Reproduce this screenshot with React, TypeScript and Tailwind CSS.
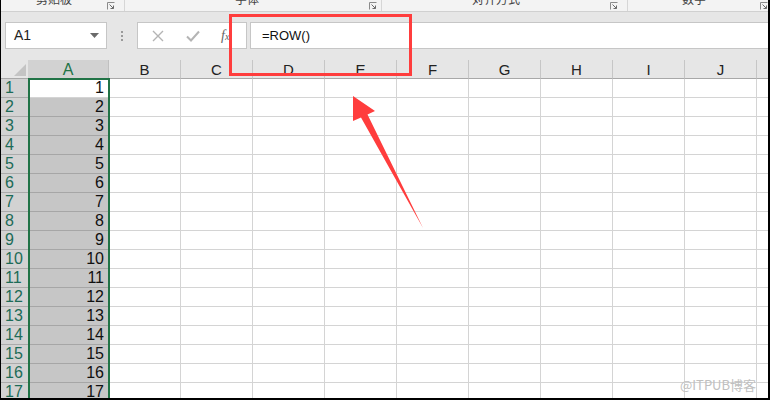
import React from "react";

const cols = ["B", "C", "D", "E", "F", "G", "H", "I", "J", ""];
const rows = Array.from({ length: 17 }, (_, i) => i + 1);

const groups = [
  { label: "剪贴板", w: "w-[124px]", lw: "w-[106px]" },
  { label: "字体", w: "w-[257px]", lw: "w-[244px]" },
  { label: "对齐方式", w: "w-[246px]", lw: "w-[228px]" },
  { label: "数字", w: "w-[143px]", lw: "w-[132px]" },
];

function Launcher() {
  return (
    <svg width="8" height="8" viewBox="0 0 8 8" className="mt-[2px] shrink-0">
      <path d="M0.5 7.5V0.5H7.5" fill="none" stroke="#8a8a8a" strokeWidth="1" />
      <path d="M2.5 2.5L6.5 6.5M6.5 3.5V6.5H3.5" fill="none" stroke="#6a6a6a" strokeWidth="1" />
    </svg>
  );
}

export default function App() {
  return (
    <div className="relative w-[770px] h-[400px] overflow-hidden bg-white border-l border-r-2 border-b-2 border-black font-['Liberation_Sans','Noto_Sans_CJK_SC',sans-serif]">
      {/* ribbon group labels, cut off at the top */}
      <div className="h-[12px] overflow-hidden bg-[#f3f3f3] border-b border-[#d0d0d0] flex">
        {groups.map((g) => (
          <div key={g.label} className={`${g.w} flex border-r border-[#d6d6d6] shrink-0`}>
            <div className={`${g.lw} text-center text-[12px] leading-[12px] -mt-[6px] text-[#444]`}>{g.label}</div>
            <Launcher />
          </div>
        ))}
      </div>

      {/* name box + formula bar */}
      <div className="h-[48px] bg-[#e6e6e6] flex items-start pt-[10px] pl-[4px] gap-0">
        <div className="w-[102px] h-[27px] bg-white border border-[#c6c6c6] flex items-center justify-between pl-[8px] pr-[7px]">
          <span className="text-[14px] text-[#222]">A1</span>
          <svg width="9" height="5" viewBox="0 0 9 5">
            <path d="M0 0H9L4.5 5Z" fill="#6a6a6a" />
          </svg>
        </div>
        <div className="w-[30px] h-[27px] flex flex-col items-center justify-center gap-[2px]">
          <span className="w-[2px] h-[2px] bg-[#9a9a9a]" />
          <span className="w-[2px] h-[2px] bg-[#9a9a9a]" />
          <span className="w-[2px] h-[2px] bg-[#9a9a9a]" />
        </div>
        <div className="w-[110px] h-[27px] bg-white border border-[#c6c6c6] flex items-center">
          <svg width="12" height="12" viewBox="0 0 12 12" className="ml-[14px]">
            <path d="M1 1L11 11M11 1L1 11" stroke="#b4b4b4" strokeWidth="1.4" />
          </svg>
          <svg width="14" height="12" viewBox="0 0 14 12" className="ml-[22px]">
            <path d="M1 6.5L5 10.5L13 1.5" fill="none" stroke="#b4b4b4" strokeWidth="2" />
          </svg>
          <span className="ml-[21px] text-[14px] italic text-[#666] font-['Liberation_Serif',serif]">
            f<span className="text-[10px]">x</span>
          </span>
        </div>
        <div className="flex-1 h-[27px] ml-[3px] bg-white border border-[#c6c6c6] border-r-0 flex items-center pl-[11px]">
          <span className="text-[13px] text-[#111]">=ROW()</span>
        </div>
      </div>

      {/* sheet */}
      <div className="grid grid-cols-[27px_81px_repeat(9,72px)_20px]">
        {/* header row */}
        <div className="h-[19px] bg-[#e6e6e6] border-b border-[#a8a8a8] flex items-end justify-end pr-[2px] pb-[2px]">
          <svg width="12" height="12" viewBox="0 0 12 12">
            <path d="M12 0V12H0Z" fill="#c4c4c4" />
          </svg>
        </div>
        <div className="h-[19px] bg-[#d2d2d2] border-b border-[#a8a8a8] border-r border-r-[#c0c0c0] text-center text-[16px] leading-[19px] text-[#217346]">
          A
        </div>
        {cols.map((c, i) => (
          <div
            key={"h" + i}
            className="h-[19px] bg-[#e6e6e6] border-b border-[#a8a8a8] border-r border-r-[#c6c6c6] text-center text-[15px] leading-[19px] text-[#222]"
          >
            {c}
          </div>
        ))}

        {rows.map((r) => (
          <React.Fragment key={r}>
            <div className="h-[19px] bg-[#d2d2d2] border-b border-[#ababab] pl-[4px] text-[16px] leading-[18px] text-[#1d6b57]">
              {r}
            </div>
            <div
              className={`h-[19px] border-b ${
                r === 1 ? "bg-white border-[#d4d4d4]" : "bg-[#c6c6c6] border-[#a6a6a6]"
              } text-right pr-[5px] text-[16px] leading-[18px] text-[#111]`}
            >
              {r}
            </div>
            {cols.map((c, i) => (
              <div key={c + i} className="h-[19px] border-b border-r border-[#d4d4d4]" />
            ))}
          </React.Fragment>
        ))}
      </div>

      {/* selection outline A1:A17 */}
      <div className="absolute left-[27px] top-[78px] w-[82px] h-[340px] border-2 border-[#217346] pointer-events-none" />

      {/* annotation: red box + arrow */}
      <div className="absolute left-[228px] top-[14px] w-[183px] h-[62px] border-[3px] border-[#ff3d3d]" />
      <svg className="absolute left-0 top-0 pointer-events-none" width="770" height="400" viewBox="0 0 770 400">
        <polygon
          points="352,96 374,111 366.5,114.5 422,228 360,117.5 352,121"
          fill="#ff3d3d"
        />
      </svg>

      {/* watermark */}
      <div className="absolute left-[679px] top-[375px] text-[13px] text-[#c0c0c0] font-['Noto_Sans_CJK_SC',sans-serif]">
        @ITPUB博客
      </div>
    </div>
  );
}
